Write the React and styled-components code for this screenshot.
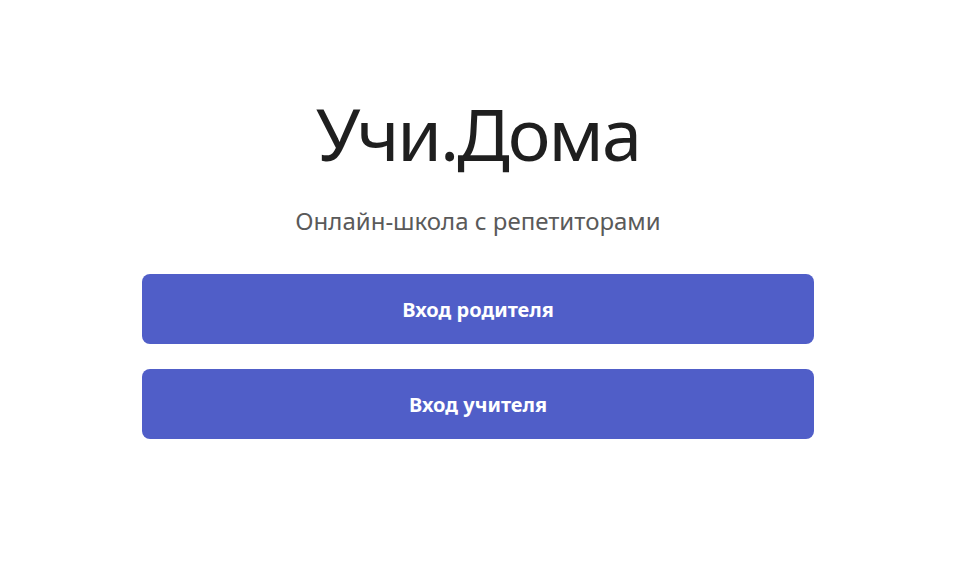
import styled, { createGlobalStyle } from 'styled-components';

const GlobalStyle = createGlobalStyle`
    html, body {
        margin: 0;
        padding: 0;
        background: #ffffff;
    }

    body {
        font-family: "Noto Sans", "Open Sans", sans-serif;
    }
`;

const Page = styled.main`
    min-height: 566px;
    display: flex;
    flex-direction: column;
    align-items: center;
    padding: 94px 4px 0 0;
    box-sizing: border-box;
`;

const Title = styled.h1`
    margin: 0;
    font-size: 72px;
    font-weight: 400;
    line-height: 1.1;
    color: #1f1f1f;
    letter-spacing: -2px;
`;

const Subtitle = styled.p`
    margin: 32px 0 38px;
    font-size: 24px;
    line-height: 1.3;
    color: #5a5a5a;
`;

const ButtonList = styled.div`
    width: 672px;
    display: flex;
    flex-direction: column;
    gap: 25px;
`;

const LoginButton = styled.button`
    height: 70px;
    border: none;
    border-radius: 8px;
    background-color: #505ec8;
    color: #ffffff;
    font-family: inherit;
    font-size: 20px;
    font-weight: 700;
    cursor: pointer;
`;

const App = () => {
    return (
        <>
            <GlobalStyle />
            <Page>
                <Title>Учи.Дома</Title>
                <Subtitle>Онлайн-школа с репетиторами</Subtitle>
                <ButtonList>
                    <LoginButton>Вход родителя</LoginButton>
                    <LoginButton>Вход учителя</LoginButton>
                </ButtonList>
            </Page>
        </>
    );
};

export default App;
